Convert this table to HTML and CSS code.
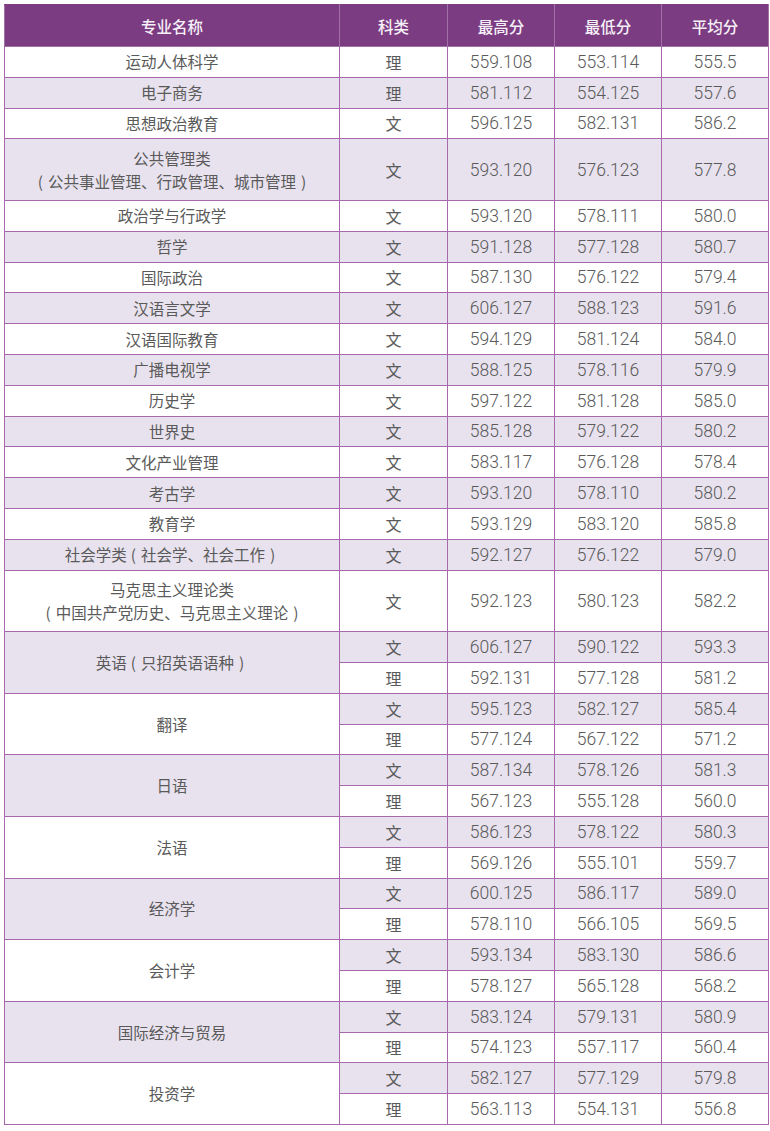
FILE: index.html
```html
<!DOCTYPE html>
<html lang="zh">
<head>
<meta charset="utf-8">
<link rel="stylesheet" href="styles.css">
</head>
<body>
<table class="score">
<colgroup><col class="c-name"><col class="c-type"><col class="c-num"><col class="c-num"><col class="c-num"></colgroup>
<thead>
<tr><th>专业名称</th><th>科类</th><th>最高分</th><th>最低分</th><th>平均分</th></tr>
</thead>
<tbody>
<tr><td class="n">运动人体科学</td><td class="k">理</td><td>559.108</td><td>553.114</td><td>555.5</td></tr>
<tr class="sh"><td class="n">电子商务</td><td class="k">理</td><td>581.112</td><td>554.125</td><td>557.6</td></tr>
<tr><td class="n">思想政治教育</td><td class="k">文</td><td>596.125</td><td>582.131</td><td>586.2</td></tr>
<tr class="sh dbl"><td class="n">公共管理类<br><span class="pl">(</span>公共事业管理、行政管理、城市管理<span class="pr">)</span></td><td class="k">文</td><td>593.120</td><td>576.123</td><td>577.8</td></tr>
<tr><td class="n">政治学与行政学</td><td class="k">文</td><td>593.120</td><td>578.111</td><td>580.0</td></tr>
<tr class="sh"><td class="n">哲学</td><td class="k">文</td><td>591.128</td><td>577.128</td><td>580.7</td></tr>
<tr><td class="n">国际政治</td><td class="k">文</td><td>587.130</td><td>576.122</td><td>579.4</td></tr>
<tr class="sh"><td class="n">汉语言文学</td><td class="k">文</td><td>606.127</td><td>588.123</td><td>591.6</td></tr>
<tr><td class="n">汉语国际教育</td><td class="k">文</td><td>594.129</td><td>581.124</td><td>584.0</td></tr>
<tr class="sh"><td class="n">广播电视学</td><td class="k">文</td><td>588.125</td><td>578.116</td><td>579.9</td></tr>
<tr><td class="n">历史学</td><td class="k">文</td><td>597.122</td><td>581.128</td><td>585.0</td></tr>
<tr class="sh"><td class="n">世界史</td><td class="k">文</td><td>585.128</td><td>579.122</td><td>580.2</td></tr>
<tr><td class="n">文化产业管理</td><td class="k">文</td><td>583.117</td><td>576.128</td><td>578.4</td></tr>
<tr class="sh"><td class="n">考古学</td><td class="k">文</td><td>593.120</td><td>578.110</td><td>580.2</td></tr>
<tr><td class="n">教育学</td><td class="k">文</td><td>593.129</td><td>583.120</td><td>585.8</td></tr>
<tr class="sh"><td class="n">社会学类<span class="pl">(</span>社会学、社会工作<span class="pr">)</span></td><td class="k">文</td><td>592.127</td><td>576.122</td><td>579.0</td></tr>
<tr class="dbl"><td class="n">马克思主义理论类<br><span class="pl">(</span>中国共产党历史、马克思主义理论<span class="pr">)</span></td><td class="k">文</td><td>592.123</td><td>580.123</td><td>582.2</td></tr>
<tr class="sh"><td rowspan="2" class="n grp-sh">英语<span class="pl">(</span>只招英语语种<span class="pr">)</span></td><td class="k">文</td><td>606.127</td><td>590.122</td><td>593.3</td></tr>
<tr><td class="k">理</td><td>592.131</td><td>577.128</td><td>581.2</td></tr>
<tr class="sh"><td rowspan="2" class="n grp">翻译</td><td class="k">文</td><td>595.123</td><td>582.127</td><td>585.4</td></tr>
<tr><td class="k">理</td><td>577.124</td><td>567.122</td><td>571.2</td></tr>
<tr class="sh"><td rowspan="2" class="n grp-sh">日语</td><td class="k">文</td><td>587.134</td><td>578.126</td><td>581.3</td></tr>
<tr><td class="k">理</td><td>567.123</td><td>555.128</td><td>560.0</td></tr>
<tr class="sh"><td rowspan="2" class="n grp">法语</td><td class="k">文</td><td>586.123</td><td>578.122</td><td>580.3</td></tr>
<tr><td class="k">理</td><td>569.126</td><td>555.101</td><td>559.7</td></tr>
<tr class="sh"><td rowspan="2" class="n grp-sh">经济学</td><td class="k">文</td><td>600.125</td><td>586.117</td><td>589.0</td></tr>
<tr><td class="k">理</td><td>578.110</td><td>566.105</td><td>569.5</td></tr>
<tr class="sh"><td rowspan="2" class="n grp">会计学</td><td class="k">文</td><td>593.134</td><td>583.130</td><td>586.6</td></tr>
<tr><td class="k">理</td><td>578.127</td><td>565.128</td><td>568.2</td></tr>
<tr class="sh"><td rowspan="2" class="n grp-sh">国际经济与贸易</td><td class="k">文</td><td>583.124</td><td>579.131</td><td>580.9</td></tr>
<tr><td class="k">理</td><td>574.123</td><td>557.117</td><td>560.4</td></tr>
<tr class="sh"><td rowspan="2" class="n grp">投资学</td><td class="k">文</td><td>582.127</td><td>577.129</td><td>579.8</td></tr>
<tr><td class="k">理</td><td>563.113</td><td>554.131</td><td>556.8</td></tr>
</tbody>
</table>
</body>
</html>
```
FILE: styles.css
```css
html, body {
  margin: 0;
  padding: 0;
  background: #ffffff;
}
.score {
  margin: 4px 0 0 4px;
  width: 763px;
  border-collapse: collapse;
  table-layout: fixed;
  font-family: Roboto, "Liberation Sans", "Noto Sans CJK SC", sans-serif;
  color: #5a5a5a;
}
.c-name { width: 335px; }
.c-type { width: 108px; }
.c-num { width: 107px; }
.score th {
  height: 41px;
  background: #7c3c82;
  color: #f6f0f8;
  font-family: "Noto Sans CJK SC", sans-serif;
  font-weight: 500;
  font-size: 15.5px;
  border: 1px solid #a070a6;
  border-top-color: #7c3c82;
  padding: 0;
  text-align: center;
}
.score td {
  height: 29.8px;
  padding: 0;
  border: 1px solid #a868ae;
  text-align: center;
  vertical-align: middle;
  font-size: 17.5px;
  font-weight: 300;
  letter-spacing: 0;
  background: #ffffff;
}
.score td.n {
  font-family: "Noto Sans CJK SC", sans-serif;
  font-size: 15.5px;
  font-weight: 400;
  line-height: 23px;
}
.score td.k {
  font-family: "Noto Sans CJK SC", sans-serif;
  font-size: 16px;
  font-weight: 400;
}
.score tr.sh td {
  background: #e8e2ee;
}
.score tr.dbl td {
  height: 60.6px;
}
.score tr.sh td.grp {
  background: #ffffff;
}
.score td.grp-sh {
  background: #e8e2ee;
}
.pl {
  margin: 0 5px 0 4px;
}
.pr {
  margin: 0 4px 0 5px;
}
```
